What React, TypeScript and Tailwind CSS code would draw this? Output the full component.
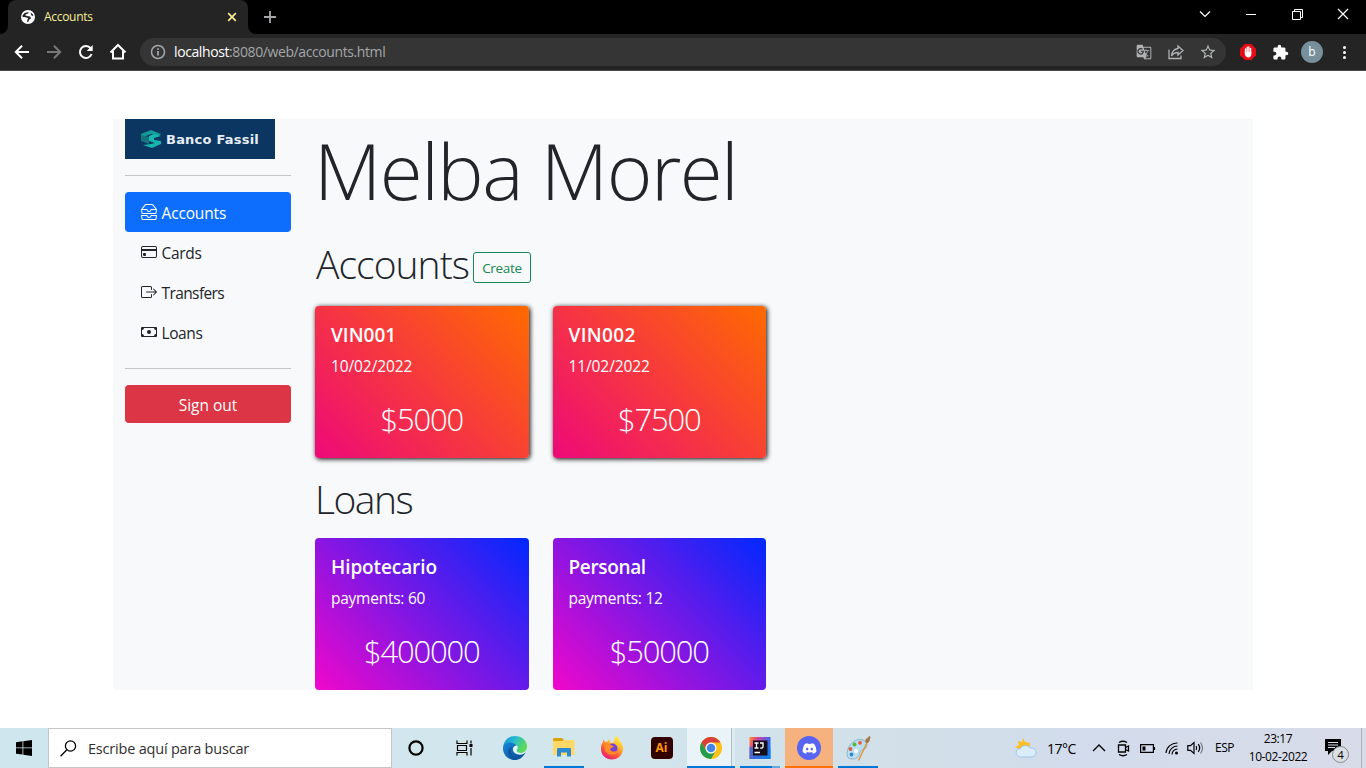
import React from "react";
import { BsInboxes, BsCreditCard, BsBoxArrowRight, BsCash } from "react-icons/bs";
import { FaDiscord } from "react-icons/fa";
import { MdExtension, MdGTranslate, MdStarBorder } from "react-icons/md";

const stroke = { fill: "none", stroke: "currentColor" } as const;

function TabStrip() {
  return (
    <div className="flex h-[34px] items-center bg-black">
      <div className="flex h-full w-2 items-end bg-[#242424]">
        <div className="h-full w-2 rounded-br-[8px] bg-black" />
      </div>
      <div className="h-full w-60 bg-black">
        <div className="flex h-full items-center rounded-t-[8px] bg-[#242424] pl-[13px] pr-[11px] text-[#f7ee96]">
          <svg width="14" height="14" viewBox="0 0 14 14" className="text-white">
            <circle cx="7" cy="7" r="7" fill="currentColor" />
            <path d="M1.600 5.200 3.600 3 7.600 2 7.200 3.600 4.800 4.200 4.400 5.600 7 6.200 9.200 6.600 10 8.600 8 9.800 7.600 11.600 6 12 6.400 9.600 7.400 8.600 5.600 7.600 3 7 1.500 7.200Z M9.600 2.600 11.800 4.200 12.400 6 10.400 5.400Z" fill="#242424" />
          </svg>
          <span className="ml-[9px] flex-1 text-[12px] leading-4 tracking-[-0.3px]">Accounts</span>
          <svg width="10" height="10" viewBox="0 0 10 10" {...stroke} strokeWidth="1.7"><path d="m1.2 1.2 7.6 7.6m0-7.6L1.2 8.8" /></svg>
        </div>
      </div>
      <div className="flex h-full w-2 bg-[#242424]">
        <div className="h-full w-2 rounded-bl-[8px] bg-black" />
      </div>
      <svg width="14" height="14" viewBox="0 0 14 14" className="ml-[7px] text-[#a5a7aa]" {...stroke} strokeWidth="1.8"><path d="M7 1v12M1 7h12" /></svg>
      <div className="ml-auto flex h-full items-center pb-[6px] text-white">
        <div className="grid w-[46px] place-items-center">
          <svg width="12" height="8" viewBox="0 0 12 8" {...stroke} strokeWidth="1.200"><path d="m1 1.500 5 5 5-5" /></svg>
        </div>
        <div className="grid w-[46px] place-items-center"><div className="mt-px h-px w-[10px] bg-white" /></div>
        <div className="grid w-[46px] place-items-center">
          <svg width="11" height="11" viewBox="0 0 11 11" {...stroke}><path d="M.5 2.500h8v8h-8zM2.500 2.500v-2h8v8h-2" /></svg>
        </div>
        <div className="grid w-[46px] place-items-center">
          <svg width="12" height="12" viewBox="0 0 12 12" {...stroke} strokeWidth="1.200"><path d="m1 1 10 10M11 1 1 11" /></svg>
        </div>
      </div>
    </div>
  );
}

function Toolbar() {
  return (
    <div className="flex h-[37px] items-center border-b border-[#4b4848] bg-[#242424] pl-[6px] pr-[6px] text-white">
      <div className="grid w-8 place-items-center">
        <svg width="16" height="16" viewBox="0 0 16 16" {...stroke} strokeWidth="2"><path d="M15 8H2.500M8 1.800 1.800 8 8 14.200" /></svg>
      </div>
      <div className="grid w-8 place-items-center text-[#77787a]">
        <svg width="16" height="16" viewBox="0 0 16 16" {...stroke} strokeWidth="2"><path d="M1 8h12.500M8 1.800 14.200 8 8 14.200" /></svg>
      </div>
      <div className="grid w-8 place-items-center">
        <svg width="16" height="16" viewBox="0 0 16 16" {...stroke} strokeWidth="2"><path d="M13.600 10A6 6 0 1 1 12.600 4.200" /><path d="M14.700 1v6H8.700Z" fill="currentColor" stroke="none" /></svg>
      </div>
      <div className="grid w-8 place-items-center">
        <svg width="18" height="18" viewBox="0 0 18 18" {...stroke} strokeWidth="2"><path d="M1.500 9.500 9 2l7.500 7.500M4 8v7.500h10V8" /></svg>
      </div>
      <div className="ml-[6px] flex h-7 flex-1 items-center rounded-full bg-[#353535] pl-[10px] pr-[10px]">
        <svg width="16" height="16" viewBox="0 0 16 16" className="text-[#a3a6aa]" {...stroke} strokeWidth="1.500"><circle cx="8" cy="8" r="6.500" /><path d="M8 7v4.500M8 4.200v1.600" strokeWidth="1.800" /></svg>
        <span className="ml-[8px] text-[14px] leading-5 tracking-[-0.4px] text-[#a3a6aa]"><span className="text-white">localhost</span>:8080/web/accounts.html</span>
        <div className="ml-auto flex items-center gap-4 text-[#b0b2b4]">
          <MdGTranslate size={16} />
          <svg width="16" height="16" viewBox="0 0 16 16" {...stroke} strokeWidth="1.300"><path d="M1 5.500v9h12v-3M10 2l5 4.500L10 11V8.500C7 8.500 5 9.500 3.500 12 4 7.500 6.500 5 10 4.500Z" /></svg>
          <MdStarBorder size={18} className="-mx-px" />
        </div>
      </div>
      <div className="ml-[6px] grid w-8 place-items-center">
        <svg width="16" height="16" viewBox="0 0 16 16"><path d="M4.700 0h6.600L16 4.700v6.600L11.300 16H4.700L0 11.300V4.700Z" fill="#e40d15" /><path d="M5.500 9V5M7.200 8V3.300M8.900 8V3M10.600 9.500V4.500" stroke="#fff" strokeWidth="1.400" strokeLinecap="round" /><path d="M4.800 8h6.500v2.500c0 1.800-1.200 2.900-2.900 2.900S4.800 12 4.800 10Z" fill="#fff" /></svg>
      </div>
      <div className="grid w-8 place-items-center"><MdExtension size={17} /></div>
      <div className="grid w-8 place-items-center">
        <div className="grid size-[22px] place-items-center rounded-full bg-[#78909c] text-[12px] leading-none">b</div>
      </div>
      <div className="grid w-8 place-items-center gap-[2px]">
        <div className="size-[3px] rounded-full bg-white" />
        <div className="size-[3px] rounded-full bg-white" />
        <div className="size-[3px] rounded-full bg-white" />
      </div>
    </div>
  );
}

const links = [
  { label: "Cards", Icon: BsCreditCard, tracking: "tracking-[-0.3px]" },
  { label: "Transfers", Icon: BsBoxArrowRight, tracking: "tracking-[-0.6px]" },
  { label: "Loans", Icon: BsCash, tracking: "tracking-[-0.4px]" },
];

function Sidebar() {
  return (
    <aside className="w-[190px] px-3 text-[15.5px]">
      <div className="flex h-10 w-[150px] items-center bg-[#0c3662] pl-[15px]">
        <svg width="22" height="18" viewBox="0 0 22 18">
          <path d="M1 4 11 0l10 4-2 2-8-2-5 2-5 2Z" fill="#149c9b" />
          <path d="m1 5 8 2v7l-8-3Z" fill="#16747f" />
          <path d="m9 6 5-2 7 2-7 2v2l7 1v3l-9 4-9-3 8-1 4-1-6-2Z" fill="#17b6ae" />
        </svg>
        <span className="ml-[4px] whitespace-nowrap font-['DejaVu_Sans',sans-serif] text-[13px] font-bold leading-none tracking-[0.22px] text-[#e6edf4]">Banco Fassil</span>
      </div>
      <div className="my-4 h-px bg-[#c4c6c8]" />
      <div className="flex h-10 items-center gap-[4.500px] rounded bg-[#0d6efd] px-4 text-white">
        <BsInboxes size={16} />
        <span className="pt-px leading-6 tracking-[-0.15px]">Accounts</span>
      </div>
      {links.map(({ label, Icon, tracking }) => (
        <div key={label} className="flex h-10 items-center gap-[4.500px] px-4 text-[#212529]">
          <Icon size={16} />
          <span className={`pt-px leading-6 ${tracking}`}>{label}</span>
        </div>
      ))}
      <div className="my-4 h-px bg-[#c4c6c8]" />
      <div className="grid h-[38px] place-items-center rounded bg-[#dc3545] pt-px leading-6 text-white">Sign out</div>
    </aside>
  );
}

function AccountCard({ name, date, amount, nameClass }: { name: string; date: string; amount: string; nameClass: string }) {
  return (
    <div className="h-[152px] w-[213.5px] rounded bg-[linear-gradient(45deg,#ee0979,#ff6a00)] p-4 text-white shadow-[1px_1px_5px_#000]">
      <div className={`h-6 text-[19px] font-semibold leading-[27px] ${nameClass}`}>{name}</div>
      <div className="mt-2 h-6 text-[15.5px] leading-[25px] tracking-[-0.1px]">{date}</div>
      <div className="mt-[22px] text-center text-[31px] font-light leading-[38px] tracking-[-1.2px]">{amount}</div>
    </div>
  );
}

function LoanCard({ name, payments, amount, nameClass }: { name: string; payments: string; amount: string; nameClass: string }) {
  return (
    <div className="h-[152px] w-[213.5px] rounded bg-[linear-gradient(45deg,#f107cb,#0028ff)] p-4 text-white">
      <div className={`h-6 text-[19px] font-semibold leading-[27px] ${nameClass}`}>{name}</div>
      <div className="mt-2 h-6 text-[15.5px] leading-[25px] tracking-[-0.25px]">{payments}</div>
      <div className="mt-[22px] text-center text-[31px] font-light leading-[38px] tracking-[-1.2px]">{amount}</div>
    </div>
  );
}

function Page() {
  return (
    <main className="flex h-[657px] justify-center bg-white pt-12 pb-[38px]">
      <div className="flex w-[1140px] bg-[#f8f9fb]">
        <Sidebar />
        <section className="flex-1 px-3 text-[#212529]">
          <h1 className="-ml-px h-[120px] whitespace-nowrap text-[78px] font-light leading-[102px] tracking-[-1.5px]">Melba Morel</h1>
          <div className="flex h-[67px] items-start">
            <h2 className="w-[158px] whitespace-nowrap pl-px text-[39px] font-light leading-[50px] tracking-[-0.95px]">Accounts</h2>
            <div className="mt-[13px] grid h-[31px] w-[58px] place-items-center rounded-[3px] border border-[#198754] pt-px text-[13.5px] tracking-[-0.3px] text-[#198754]">Create</div>
          </div>
          <div className="flex gap-6">
            <AccountCard name="VIN001" date="10/02/2022" amount="$5000" nameClass="tracking-[0px]" />
            <AccountCard name="VIN002" date="11/02/2022" amount="$7500" nameClass="tracking-[0.35px]" />
          </div>
          <h2 className="mt-4 h-16 whitespace-nowrap text-[39px] font-light leading-[50px] tracking-[-1.5px]">Loans</h2>
          <div className="flex gap-6">
            <LoanCard name="Hipotecario" payments="payments: 60" amount="$400000" nameClass="tracking-[-0.1px]" />
            <LoanCard name="Personal" payments="payments: 12" amount="$50000" nameClass="tracking-[-0.35px]" />
          </div>
        </section>
      </div>
    </main>
  );
}

function Slot({ children, className = "", bar }: { children: React.ReactNode; className?: string; bar?: React.ReactNode }) {
  return (
    <div className={`flex h-10 flex-col items-center ${className}`}>
      <div className="grid h-[38px] place-items-center pt-[2px]">{children}</div>
      {bar}
    </div>
  );
}

function EdgeIcon() {
  return (
    <svg width="24" height="24" viewBox="0 0 24 24">
      <defs>
        <linearGradient id="edgeTop" x1="0" y1="0" x2="1" y2=".4"><stop stopColor="#1687d0" /><stop offset=".5" stopColor="#2bbcd1" /><stop offset="1" stopColor="#5ddb54" /></linearGradient>
        <linearGradient id="edgeLow" x1="0" y1="0" x2="1" y2="1"><stop stopColor="#1689db" /><stop offset="1" stopColor="#08478f" /></linearGradient>
      </defs>
      <path d="M0 11C1 4 6 0 12 0c7 0 12 5 12 10.500 0 4-3 6.500-6.500 6.500-2.500 0-4-1-4-2 0-.8 1-1.200 1-3 0-2-2-4.500-6-4.500C4 7.500 1 9 0 11Z" fill="url(#edgeTop)" />
      <path d="M0 12c0-4 4-6 8-5.500 3.500.5 6 2.500 6 5.500 0 1.200-.8 1.500-1 2.600C12.500 18 20 19 22.500 16.500 20 21.500 16 24 12 24 5 24 0 19 0 12Z" fill="url(#edgeLow)" />
      <path d="M9 11c-3 5 1 11 6.500 12C9 24 5 20 5 16c0-2 1.500-4.200 4-5Z" fill="#0c579f" />
      <path d="M14 9.500c1 2 .5 3-.5 4.500-.5 1.500 1 3 4 3 2 0 4-.5 5-1.500-1.500 3-4.500 3.500-7.500 3-4-1-5.500-3.500-5-6 .4-2 2-3 4-3Z" fill="#e3f5fa" />
    </svg>
  );
}

function FirefoxIcon() {
  return (
    <svg width="24" height="24" viewBox="0 0 24 24">
      <defs><linearGradient id="fox" x1=".8" y1="0" x2=".2" y2="1"><stop stopColor="#fff44f" /><stop offset=".35" stopColor="#ffb92e" /><stop offset=".65" stopColor="#ff5a35" /><stop offset="1" stopColor="#e31587" /></linearGradient></defs>
      <path d="M16 0c3 2 3 3 4 5 3 3 3.500 7 2.800 10C21.500 20 17 23.500 12 23.500 5.500 23.500 1 19 1 13c0-3 .7-5.500 2-7V3.500L5.500 6 8 5.300 9 3l2 4 3-1c0-3 .5-4.500 2-6Z" fill="url(#fox)" />
      <circle cx="12.500" cy="12.500" r="5" fill="#7542d6" />
      <path d="M4 8c3-1.500 5-.5 7 1 1 1 2 .8 3 1.200-1 1.500-3 1.300-4 3 1 3 5 3 7.500 1-1 4-4 5-7 4.300C6 17.500 4 14 4 8Z" fill="#ff8b28" />
    </svg>
  );
}

function Taskbar() {
  return (
    <footer className="flex h-10 bg-[linear-gradient(90deg,#cfe6ee_0%,#d2e6ed_42%,#d2dfe8_68%,#d2dcec_78%,#d8dbe8_100%)] text-black">
      <Slot className="w-12">
        <svg width="16" height="16" viewBox="0 0 16 16"><path d="M0 2.200 6.500 1.300v6.200H0ZM7.300 1.200 16 0v7.500H7.300ZM0 8.300h6.500v6.300L0 13.700ZM7.300 8.300H16V16l-8.700-1.300Z" /></svg>
      </Slot>
      <div className="flex h-10 w-[344px] items-center border border-[#c5c5c5] bg-white pl-[11px]">
        <svg width="17" height="17" viewBox="0 0 17 17" {...stroke} strokeWidth="1.300"><circle cx="10.500" cy="6" r="5.100" /><path d="m6.800 9.700-6.200 6.500" /></svg>
        <span className="ml-[11px] whitespace-nowrap pt-[2px] text-[14.5px] leading-5 tracking-[-0.2px] text-[#303030]">Escribe aquí para buscar</span>
      </div>
      <Slot className="w-12"><svg width="16" height="16" viewBox="0 0 16 16" {...stroke} strokeWidth="2.200"><circle cx="8" cy="8" r="6.600" /></svg></Slot>
      <Slot className="w-12">
        <svg width="17" height="16" viewBox="0 0 17 16" {...stroke} strokeWidth="1.200"><path d="M1 .5v3h10v-3M1 15.500v-3h10v3M1.500 5.500h9v5h-9zM15 .5v3M15 8v7.500" /><path d="M13.500 4h3v3h-3z" fill="currentColor" stroke="none" /></svg>
      </Slot>
      <Slot className="w-[54px]"><EdgeIcon /></Slot>
      <Slot className="w-11" bar={<div className="h-[2px] w-10 bg-[#0078d7]" />}>
        <svg width="22" height="19" viewBox="0 0 22 19" className="-mt-px"><path d="M1 0h8l2 2h10v5H0V1Z" fill="#d9a400" /><path d="M0 3h9l2-1h10.500v15H0Z" fill="#ffd867" /><path d="M4 18.500V11q0-1 1-1h12q1 0 1 1v7.500h-4v-4H8v4Z" fill="#2c8bd0" /></svg>
      </Slot>
      <Slot className="w-[52px]"><FirefoxIcon /></Slot>
      <Slot className="w-[47px]"><div className="grid size-[22px] place-items-center rounded-[4px] bg-[#330000] text-[12px] font-bold leading-none text-[#ff9a00]">Ai</div></Slot>
      <div className="ml-[2px] flex w-12 bg-[#eaf3f7]">
        <Slot className="w-[45px] border-r border-[#aebfca]" bar={<div className="-mr-[4px] h-[2px] w-12 bg-[#0078d7]" />}>
          <svg width="22" height="22" viewBox="0 0 22 22" className="ml-[4px]">
            <circle cx="11" cy="11" r="11" fill="#fbc116" />
            <path d="M1.500 5.500A11 11 0 0 1 20.500 5.500H11A5.500 5.500 0 0 0 6.200 13.750Z" fill="#d8403a" />
            <path d="M1.500 5.500A11 11 0 0 0 11 22L15.760 13.750A5.500 5.500 0 0 1 6.240 13.750Z" fill="#229c50" />
            <circle cx="11" cy="11" r="5.500" fill="#fff" /><circle cx="11" cy="11" r="4.300" fill="#4285e8" />
          </svg>
        </Slot>
        <div className="h-[38px] w-[3px] bg-[#dceaf1]" />
      </div>
      <Slot className="ml-[5px] w-10" bar={<div className="flex h-[2px] w-10 bg-[#0078d7]"><div className="ml-auto w-2 bg-[#65a8df]" /></div>}>
        <svg width="22" height="22" viewBox="0 0 21 22" className="mr-px">
          <defs><linearGradient id="ij" x1="0" y1="0" x2="1" y2=".5"><stop stopColor="#ff991c" /><stop offset=".3" stopColor="#e0418f" /><stop offset=".6" stopColor="#8052d0" /><stop offset="1" stopColor="#087cfa" /></linearGradient></defs>
          <path d="M0 0h21v22H0Z" fill="url(#ij)" /><path d="M0 10v12h21V12Z" fill="#1977e2" opacity=".7" /><path d="M3.500 3.500h14.500v15H3.500Z" fill="#150d18" />
          <path d="M5 6h4M7 6v5M5 11h4M10.500 6h3v3.800q0 1.400-2.800 1.200M5 15.500h5.500" {...stroke} stroke="#fff" strokeWidth="1.300" />
        </svg>
      </Slot>
      <Slot className="ml-[5px] w-12 bg-[#f5b27e]" bar={<div className="h-[2px] w-12 bg-[#ff7200]" />}>
        <div className="grid size-6 place-items-center rounded-full bg-[#5865f2] text-white"><FaDiscord size={15} /></div>
      </Slot>
      <Slot className="ml-[5px] w-10" bar={<div className="h-[2px] w-10 bg-[#0078d7]" />}>
        <svg width="26" height="25" viewBox="0 0 26 25"><path d="M3 13C5 6 13 2 18 4c4 2 5 5 3 8-2 2-5 1-6 4-1 4-2 7-8 7-5 0-6-4-4-10Z" fill="#b9dff0" stroke="#8bb3c6" /><circle cx="5.500" cy="13" r="1.900" fill="#e45c43" /><circle cx="9.500" cy="8.500" r="1.900" fill="#56b83b" /><circle cx="15" cy="6.800" r="1.900" fill="#ed5940" /><circle cx="6.500" cy="18.500" r="1.900" fill="#3488c7" /><circle cx="11" cy="15" r="2" fill="#f8fcff" /><path d="m21.500 6-8 17c-1 2 1 2 1.500 0l7.500-16Z" fill="#e79131" /><path d="M20.500 6c-1-3 1-3 4-6l1 1c-1 4-1 6-4 6Z" fill="#a87847" /></svg>
      </Slot>
      <div className="ml-auto flex h-full items-center">
        <svg width="22" height="21" viewBox="0 0 22 21"><path d="m8 0 2 4 5 1-1 8-8-1-6-3 4-2-1-4 4 1Z" fill="#ffbe22" /><path d="M5.500 19a4.300 4.300 0 0 1 0-8.600 5.500 5.500 0 0 1 9.500-.4 4.700 4.700 0 0 1 6 4.500c0 3-2 4.500-4.500 4.500Z" fill="#d9edfd" stroke="#8fc0ea" strokeWidth=".8" /></svg>
        <span className="ml-[10px] w-[45px] whitespace-nowrap text-[14px] tracking-[-0.5px]">17°C</span>
        <svg width="14" height="8" viewBox="0 0 14 8" {...stroke} strokeWidth="1.400"><path d="m1 7 6-6 6 6" /></svg>
        <svg width="13" height="17" viewBox="0 0 13 17" className="ml-[11px]" {...stroke} strokeWidth="1.300"><path d="M2 2.500Q6 0 10 2.500M2 14.500Q6 17 10 14.500M1.500 5h7v7h-7zM8.500 7.500l3-1.500v5l-3-1.500" /></svg>
        <svg width="16" height="9" viewBox="0 0 16 9" className="ml-[10px]" {...stroke} strokeWidth="1.200"><path d="M.6.600h12.800v7.800H.6zM14.500 3v3" /><path d="M2.500 2.500h3v4h-3z" fill="currentColor" stroke="none" /></svg>
        <svg width="14" height="14" viewBox="0 0 14 14" className="ml-[9px]" {...stroke} strokeWidth="1.100"><path d="M1 12A11 11 0 0 1 12.500 2M4 13A8.500 8.500 0 0 1 12.500 5M7 13.500A6 6 0 0 1 12.500 8" /><circle cx="11.500" cy="12" r="1.500" fill="currentColor" stroke="none" /></svg>
        <svg width="17" height="14" viewBox="0 0 17 14" className="ml-[8px]" {...stroke} strokeWidth="1.200"><path d="M.8 4.700h2.700L7 1.500v11L3.500 9.300H.8ZM9 5q1.500 2 0 4M11.200 3.200q3 3.800 0 7.600" /><path d="M13.500 1.500q4 5.500 0 11" opacity=".45" /></svg>
        <span className="ml-[11px] w-[33px] text-[12px] tracking-[-0.5px]">ESP</span>
        <div className="w-[60px] whitespace-nowrap text-center text-[12px] leading-[18px] tracking-[-0.4px]"><div>23:17</div><div>10-02-2022</div></div>
        <div className="relative ml-[17px] h-6 w-[36px]">
          <svg width="16" height="16" viewBox="0 0 16 16" className="mt-[3px]"><path d="M0 0h16v12H7l-4 4v-4H0Z" /><path d="M3 3.500h10M3 6h10M3 8.500h7" stroke="#d8dbe8" strokeWidth="1.200" /></svg>
          <div className="absolute left-[7px] top-[10px] grid size-[17px] place-items-center rounded-full border border-[#858b92] bg-[#dcdee3] text-[11.5px] leading-none">4</div>
        </div>
        <div className="h-full w-[5px] border-l border-[#abb0ba]" />
      </div>
    </footer>
  );
}

export default function App() {
  return (
    <div className="h-[768px] w-[1366px] overflow-hidden bg-white font-['Open_Sans','Noto_Sans',sans-serif]">
      <TabStrip />
      <Toolbar />
      <Page />
      <Taskbar />
    </div>
  );
}
